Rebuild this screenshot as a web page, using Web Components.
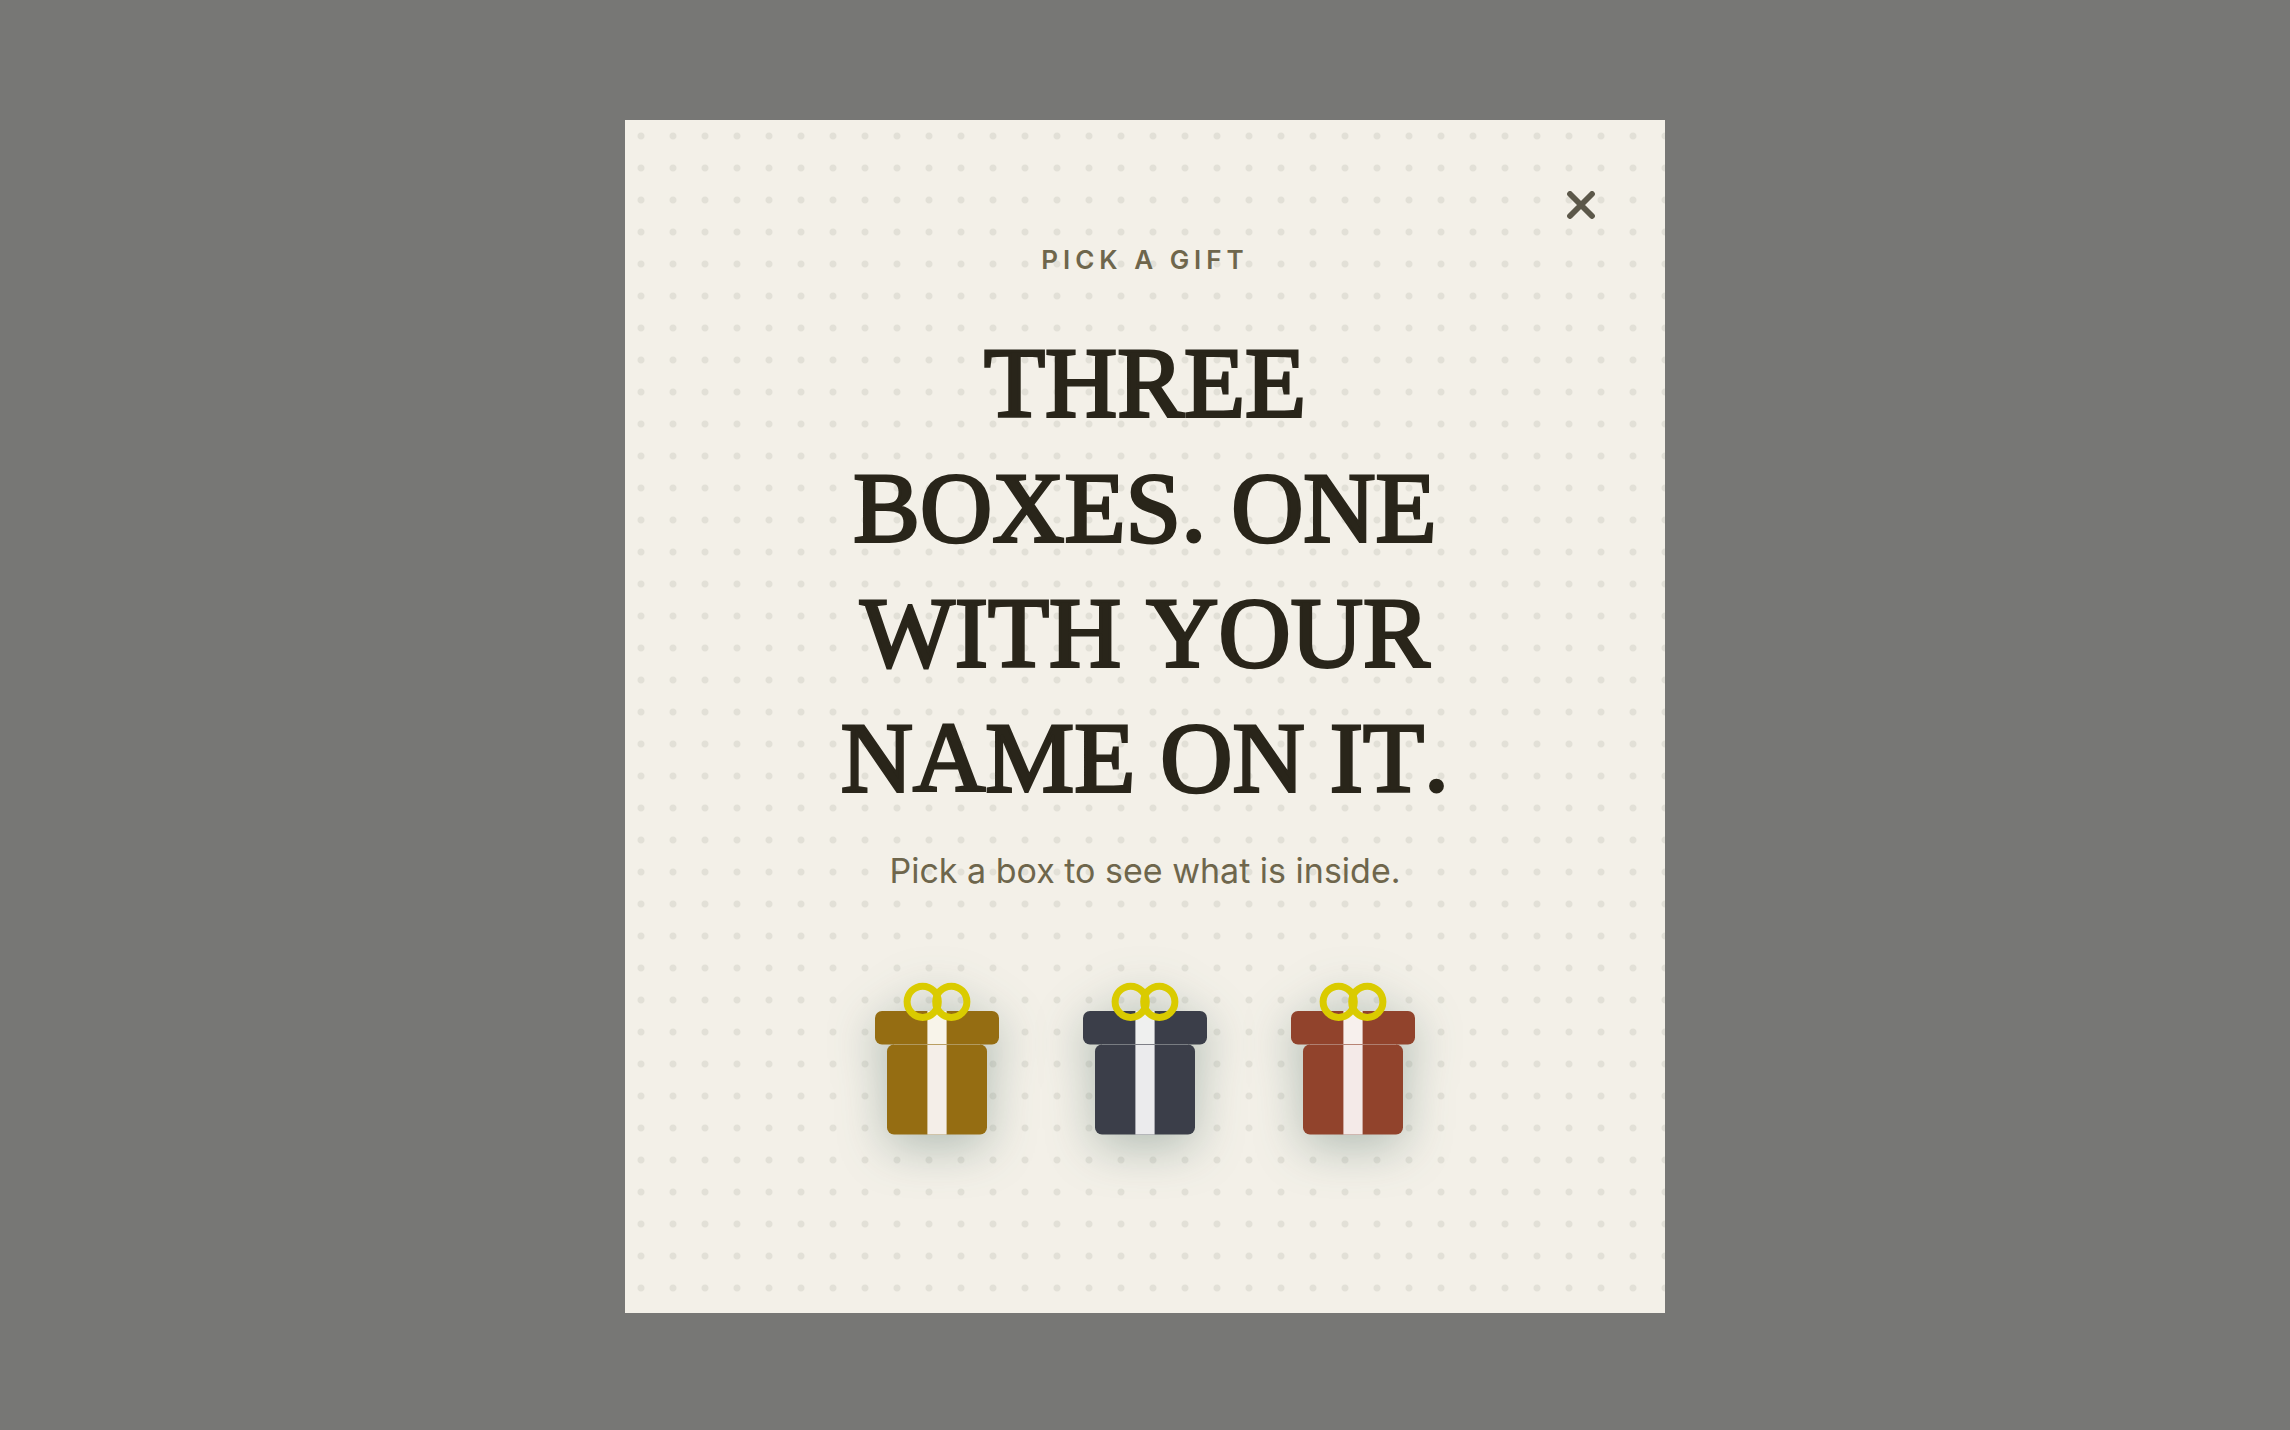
<!DOCTYPE html>
<html lang="en">
<head>
<meta charset="UTF-8">
<meta name="viewport" content="width=device-width, initial-scale=1">
<title>Pick a gift</title>
<style>
  body {
    margin: 0;
    background: #777775;
    font-family: Inter, "Liberation Sans", sans-serif;
  }
</style>
</head>
<body>
<gift-dialog>
  <span slot="eyebrow">PICK A GIFT</span>
  <span slot="title">THREE BOXES. ONE WITH YOUR NAME ON IT.</span>
  <span slot="text">Pick a box to see what is inside.</span>
  <gift-box color="#956d12" ribbon="#f4eee8" lid-ribbon="#f8f4ea" label="Gold box"></gift-box>
  <gift-box color="#3b3e49" ribbon="#ebebed" lid-ribbon="#eff0ef" label="Navy box"></gift-box>
  <gift-box color="#91432c" ribbon="#f4eae8" lid-ribbon="#f7f0ed" label="Red box"></gift-box>
</gift-dialog>

<script>
class CloseButton extends HTMLElement {
  constructor() {
    super();
    this.attachShadow({ mode: "open" });
  }

  connectedCallback() {
    this.shadowRoot.innerHTML = `
      <style>
        :host {
          display: block;
        }

        button {
          display: grid;
          place-items: center;
          width: 48px;
          height: 48px;
          padding: 0;
          border: none;
          background: none;
          color: #5c584a;
          cursor: pointer;
        }
      </style>

      <button type="button" aria-label="Close">
        <svg width="28" height="28" viewBox="0 0 28 28" fill="none" stroke="currentColor" stroke-width="5.8" stroke-linecap="round">
          <path d="M3 3l22 22M25 3L3 25"/>
        </svg>
      </button>
    `;

    this.shadowRoot.querySelector("button").addEventListener("click", () => {
      this.dispatchEvent(new CustomEvent("close-dialog", { bubbles: true, composed: true }));
    });
  }
}

class GiftBox extends HTMLElement {
  constructor() {
    super();
    this.attachShadow({ mode: "open" });
  }

  connectedCallback() {
    const color = this.getAttribute("color");
    const ribbon = this.getAttribute("ribbon");
    const lidRibbon = this.getAttribute("lid-ribbon");
    const label = this.getAttribute("label");

    this.shadowRoot.innerHTML = `
      <style>
        :host {
          display: block;
        }

        button {
          display: block;
          padding: 0;
          border: none;
          background: none;
          cursor: pointer;
        }

        svg {
          display: block;
          overflow: visible;
          filter: drop-shadow(0 12px 24px rgba(40, 80, 70, 0.32));
        }
      </style>

      <button type="button" aria-label="${label}">
        <svg width="160" height="160" viewBox="0 0 160 160">
          <rect x="30" y="69.5" width="100" height="90" rx="7" fill="${color}"/>
          <rect x="70.4" y="69.5" width="19.2" height="90" fill="${ribbon}"/>
          <rect x="18" y="36" width="124" height="33.5" rx="7" fill="${color}"/>
          <rect x="70.4" y="36" width="19.2" height="33.5" fill="${lidRibbon}"/>
          <path d="M37 69.5h86" stroke="#fff" stroke-opacity="0.18"/>
          <path d="M70.4 69.5h19.2" stroke="${color}" stroke-opacity="0.5"/>
          <g fill="none" stroke="#dacb00" stroke-width="7">
            <circle cx="65.7" cy="26.8" r="15.6"/>
            <circle cx="94.3" cy="26.8" r="15.6"/>
          </g>
        </svg>
      </button>
    `;

    this.shadowRoot.querySelector("button").addEventListener("click", () => {
      this.dispatchEvent(
        new CustomEvent("pick-box", {
          detail: { label },
          bubbles: true,
          composed: true
        })
      );
    });
  }
}

class GiftDialog extends HTMLElement {
  constructor() {
    super();
    this.attachShadow({ mode: "open" });
  }

  connectedCallback() {
    this.shadowRoot.innerHTML = `
      <style>
        :host {
          display: flex;
          justify-content: center;
          align-items: flex-start;
          box-sizing: border-box;
          min-height: 100vh;
          padding: 120px 24px 116px;
        }

        .card {
          display: flex;
          flex-direction: column;
          align-items: center;
          box-sizing: border-box;
          width: 100%;
          max-width: 1040px;
          padding: 61px 60px 178px;
          text-align: center;
          background-color: #f3f0e8;
          background-image: radial-gradient(circle, #e2e0d7 3px, #e2e0d700 4px);
          background-size: 32px 32px;
        }

        close-button {
          align-self: flex-end;
        }

        p, h1 {
          margin: 0;
        }

        .eyebrow {
          margin-top: 13px;
          font-size: 26px;
          font-weight: 600;
          line-height: 36px;
          letter-spacing: 5px;
          color: #6e664c;
        }

        h1 {
          max-width: 640px;
          margin-top: 42px;
          font-family: "Liberation Serif", serif;
          font-size: 100px;
          font-weight: 400;
          font-kerning: none;
          line-height: 125px;
          color: #29251a;
          -webkit-text-stroke: 3px #29251a;
        }

        .text {
          margin-top: 27px;
          font-size: 34px;
          line-height: 48px;
          color: #6e664c;
        }

        .boxes {
          display: flex;
          flex-wrap: wrap;
          justify-content: center;
          gap: 48px;
          margin-top: 80px;
        }
      </style>

      <section class="card" role="dialog" aria-labelledby="title">
        <close-button></close-button>
        <p class="eyebrow"><slot name="eyebrow"></slot></p>
        <h1 id="title"><slot name="title"></slot></h1>
        <p class="text"><slot name="text"></slot></p>
        <div class="boxes"><slot></slot></div>
      </section>
    `;
  }
}

customElements.define("close-button", CloseButton);
customElements.define("gift-box", GiftBox);
customElements.define("gift-dialog", GiftDialog);
</script>
</body>
</html>
